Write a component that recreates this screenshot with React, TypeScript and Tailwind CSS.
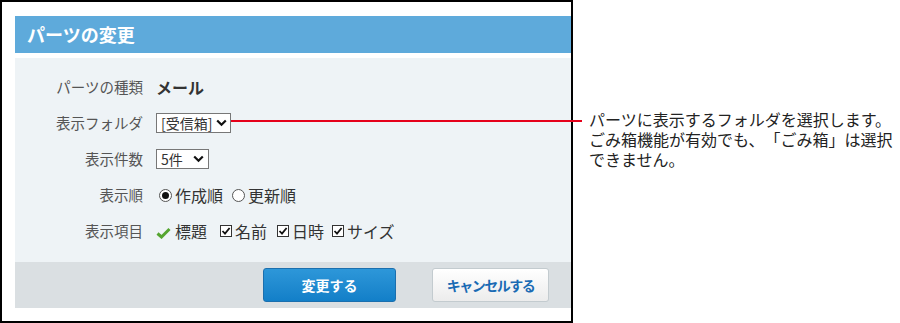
import * as React from 'react';

const font = "font-['Noto_Sans_CJK_JP','Noto_Sans',sans-serif] [text-spacing-trim:space-all]";

function Chevron() {
  return (
    <svg width="11" height="8" viewBox="0 0 11 8" className="shrink-0">
      <path d="M1.2 1.5 L5.5 5.8 L9.8 1.5" fill="none" stroke="#111" strokeWidth="2.2" />
    </svg>
  );
}

function CheckBox({ label }: { label: string }) {
  return (
    <span className="flex items-center">
      <span className="w-[12px] h-[12px] border border-[#333] bg-white flex items-center justify-center">
        <svg width="10" height="10" viewBox="0 0 10 10">
          <path d="M1.5 5 L4 7.6 L8.6 2" fill="none" stroke="#111" strokeWidth="1.8" />
        </svg>
      </span>
      <span className="ml-[3px]">{label}</span>
    </span>
  );
}

function Radio({ checked, label }: { checked: boolean; label: string }) {
  return (
    <span className="flex items-center">
      <span className="w-[13px] h-[13px] rounded-full border border-[#555] bg-white flex items-center justify-center">
        {checked && <span className="w-[7px] h-[7px] rounded-full bg-[#111]" />}
      </span>
      <span className="ml-[3px]">{label}</span>
    </span>
  );
}

function Row({ label, children }: { label: string; children: React.ReactNode }) {
  return (
    <div className="flex items-center h-9">
      <div className="w-[128px] text-right text-[14.5px] text-[#555]">{label}</div>
      <div className="ml-[13px] flex items-center text-[16px] text-[#333]">{children}</div>
    </div>
  );
}

export default function App() {
  return (
    <div className={`relative w-[900px] h-[323px] bg-white ${font}`}>
      <div className="w-[573px] h-[323px] border-2 border-black pl-[13px] pt-[14px]">
        <div className="h-[37px] bg-[#5eaadb] pl-[12px] flex items-center text-white font-bold text-[18px]">
          パーツの変更
        </div>
        <div className="mt-[5px] h-[204px] bg-[#eef3f6] pt-[11px] leading-[20px]">
          <Row label="パーツの種類">
            <span className="font-bold text-[16px] text-[#333]">メール</span>
          </Row>
          <Row label="表示フォルダ">
            <div className="w-[75px] h-[20px] border border-[#777] bg-white flex items-center justify-between pl-[4px] pr-[3px] text-[14px] text-[#333]">
              <span>[受信箱]</span>
              <Chevron />
            </div>
          </Row>
          <Row label="表示件数">
            <div className="w-[53px] h-[20px] border border-[#777] bg-white flex items-center justify-between pl-[4px] pr-[4px] text-[14px] text-[#333]">
              <span>5件</span>
              <Chevron />
            </div>
          </Row>
          <Row label="表示順">
            <div className="flex items-center gap-[9px] pl-[3px]">
              <Radio checked label="作成順" />
              <Radio checked={false} label="更新順" />
            </div>
          </Row>
          <Row label="表示項目">
            <div className="flex items-center">
              <span className="flex items-center">
                <svg width="15" height="12" viewBox="0 0 15 12" className="mt-[3px]">
                  <path d="M1.5 6.5 L5.5 10 L13.5 2" fill="none" stroke="#55a530" strokeWidth="3" />
                </svg>
                <span className="ml-[4px]">標題</span>
              </span>
              <span className="ml-[13px]"><CheckBox label="名前" /></span>
              <span className="ml-[10px]"><CheckBox label="日時" /></span>
              <span className="ml-[8px]"><CheckBox label="サイズ" /></span>
            </div>
          </Row>
        </div>
        <div className="h-[46px] bg-[#dadfe2] flex items-center pl-[248px]">
          <button className="w-[133px] h-[34px] rounded-[3px] border border-[#1b6fae] bg-gradient-to-b from-[#2d97d9] to-[#127fc8] text-white font-bold text-[14px]">
            変更する
          </button>
          <button className="ml-[36px] w-[117px] h-[34px] rounded-[3px] border border-[#c3cbcf] bg-gradient-to-b from-white to-[#ececec] text-[#1a6bb4] font-bold text-[14px] tracking-[-1.5px]">
            キャンセルする
          </button>
        </div>
      </div>
      <div className="absolute left-[231px] top-[120px] w-[351px] h-[2px] bg-[#e5001a]" />
      <div className="absolute left-[589px] top-[109px] text-[16px] leading-[20px] text-[#222]">
        <p>パーツに表示するフォルダを選択します。</p>
        <p>ごみ箱機能が有効でも、「ごみ箱」は選択</p>
        <p>できません。</p>
      </div>
    </div>
  );
}
